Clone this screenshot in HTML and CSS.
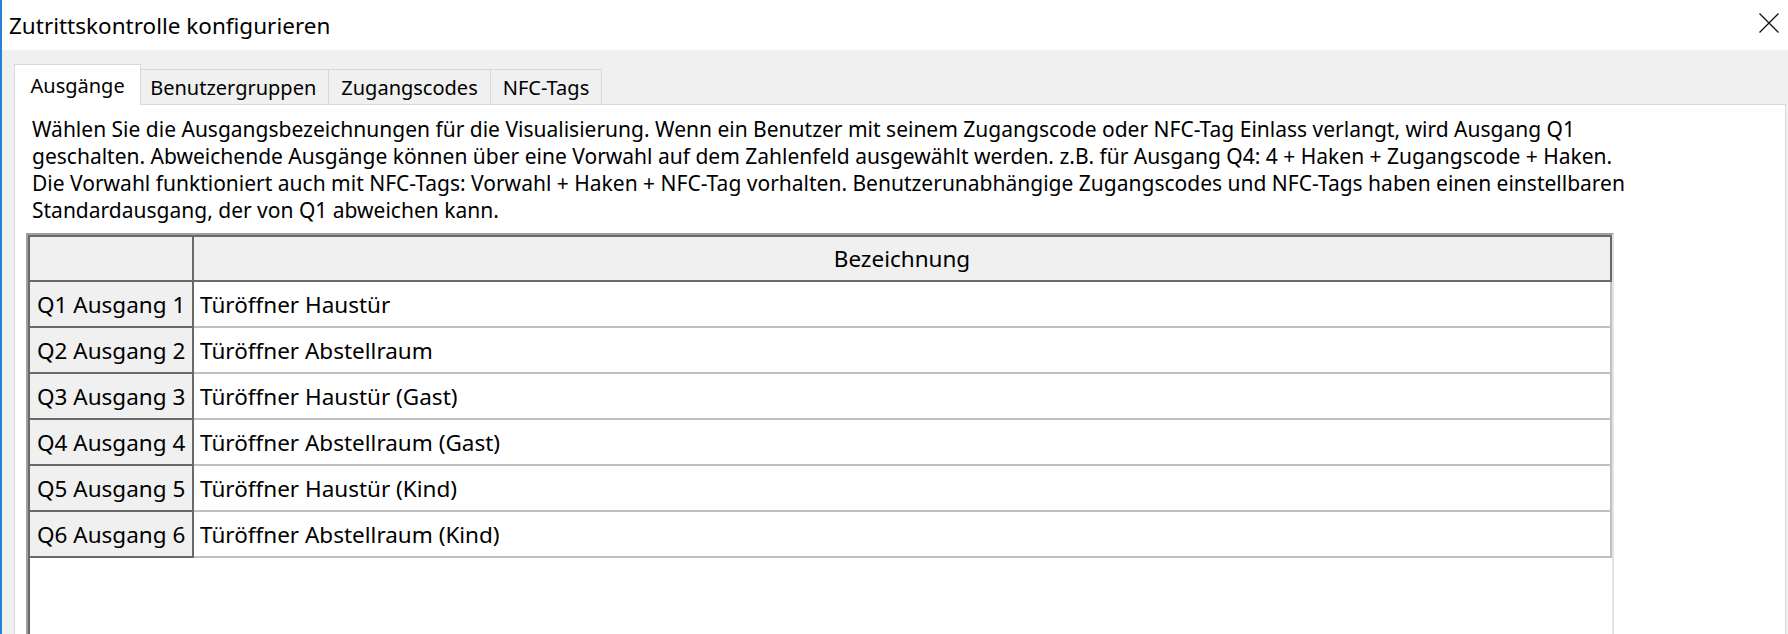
FILE: index.html
```html
<!DOCTYPE html>
<html lang="de">
<head>
<meta charset="utf-8">
<title>Zutrittskontrolle konfigurieren</title>
<link rel="stylesheet" href="styles.css">
</head>
<body>
<div class="window">
  <div class="titlebar">
    <span class="title">Zutrittskontrolle konfigurieren</span>
    <svg class="close" width="20" height="20" viewBox="0 0 20 20" aria-label="Schließen">
      <path d="M0.5 0.5 L19.5 19.5 M19.5 0.5 L0.5 19.5" stroke="#111" stroke-width="1.3" fill="none"/>
    </svg>
  </div>
  <div class="client">
    <div class="tabs">
      <div class="tab active">Ausgänge</div>
      <div class="tab">Benutzergruppen</div>
      <div class="tab">Zugangscodes</div>
      <div class="tab">NFC-Tags</div>
    </div>
    <div class="panel">
      <p class="desc">Wählen Sie die Ausgangsbezeichnungen für die Visualisierung. Wenn ein Benutzer mit seinem Zugangscode oder NFC-Tag Einlass verlangt, wird Ausgang Q1<br>geschalten. Abweichende Ausgänge können über eine Vorwahl auf dem Zahlenfeld ausgewählt werden. z.B. für Ausgang Q4: 4 + Haken + Zugangscode + Haken.<br>Die Vorwahl funktioniert auch mit NFC-Tags: Vorwahl + Haken + NFC-Tag vorhalten. Benutzerunabhängige Zugangscodes und NFC-Tags haben einen einstellbaren<br>Standardausgang, der von Q1 abweichen kann.</p>
      <div class="grid">
        <div class="grid-inner">
          <div class="row head">
            <div class="rh corner"></div>
            <div class="colhead">Bezeichnung</div>
          </div>
          <div class="row"><div class="rh">Q1 Ausgang 1</div><div class="cell">Türöffner Haustür</div></div>
          <div class="row"><div class="rh">Q2 Ausgang 2</div><div class="cell">Türöffner Abstellraum</div></div>
          <div class="row"><div class="rh">Q3 Ausgang 3</div><div class="cell">Türöffner Haustür (Gast)</div></div>
          <div class="row"><div class="rh">Q4 Ausgang 4</div><div class="cell">Türöffner Abstellraum (Gast)</div></div>
          <div class="row"><div class="rh">Q5 Ausgang 5</div><div class="cell">Türöffner Haustür (Kind)</div></div>
          <div class="row"><div class="rh">Q6 Ausgang 6</div><div class="cell">Türöffner Abstellraum (Kind)</div></div>
        </div>
      </div>
    </div>
  </div>
</div>
</body>
</html>
```
FILE: styles.css
```css
html, body {
  margin: 0;
  padding: 0;
}

body {
  width: 1788px;
  height: 634px;
  overflow: hidden;
  background: #f0f0f0;
  font-family: "Noto Sans", "DejaVu Sans", sans-serif;
  color: #000;
}

.window {
  height: 634px;
  box-sizing: border-box;
  border-left: 2px solid #2a7fd6;
  display: flex;
  flex-direction: column;
}

.titlebar {
  flex: none;
  height: 50px;
  background: #fff;
  display: flex;
  align-items: center;
  justify-content: space-between;
  padding: 0 9px 0 7px;
}

.title {
  font-size: 22.5px;
}

.close {
  align-self: flex-start;
  margin-top: 13px;
}

.client {
  flex: 1;
  min-height: 0;
  display: flex;
  flex-direction: column;
  padding: 14px 2px 0 12px;
}

.tabs {
  flex: none;
  height: 40px;
  display: flex;
  align-items: flex-end;
  position: relative;
  z-index: 1;
}

.tab {
  height: 35px;
  box-sizing: border-box;
  border: 1px solid #d9d9d9;
  border-left: none;
  border-bottom: none;
  padding: 0 12px;
  background: #f0f0f0;
  font-size: 20px;
  display: flex;
  align-items: center;
}

.tab.active {
  position: relative;
  z-index: 1;
  height: 41px;
  margin-bottom: -1px;
  margin-right: -3px;
  background: #fff;
  border-left: 1px solid #d9d9d9;
  padding: 0 15.5px;
}

.panel {
  flex: 1;
  min-height: 0;
  display: flex;
  flex-direction: column;
  background: #fff;
  border: 1px solid #d9d9d9;
  border-bottom: none;
  padding: 11px 0 0 11px;
}

.desc {
  margin: 0 0 9px 0;
  padding-left: 6px;
  font-size: 21px;
  line-height: 27px;
  white-space: nowrap;
}

.grid {
  flex: 1;
  width: 1588px;
  box-sizing: border-box;
  border-style: solid;
  border-width: 2px 2px 0 2px;
  border-color: #a0a0a0 #e3e3e3 #e3e3e3 #a0a0a0;
  background: #fff;
}

.grid-inner {
  height: 100%;
  border-style: solid;
  border-width: 2px 0 0 2px;
  border-color: #696969;
}

.row {
  display: flex;
  height: 46px;
  font-size: 22.5px;
}

.row.head {
  height: 45px;
}

.rh {
  width: 155px;
  flex: none;
  box-sizing: content-box;
  background: #f0f0f0;
  border-right: 2px solid #696969;
  border-bottom: 2px solid #696969;
  padding-left: 7px;
  display: flex;
  align-items: center;
  white-space: nowrap;
}

.rh.corner {
  padding-left: 0;
  width: 162px;
}

.colhead {
  width: 1416px;
  flex: none;
  background: #f0f0f0;
  border-right: 2px solid #696969;
  border-bottom: 2px solid #696969;
  display: flex;
  align-items: center;
  justify-content: center;
}

.cell {
  width: 1410px;
  flex: none;
  padding-left: 6px;
  border-right: 2px solid #c0c0c0;
  border-bottom: 2px solid #c0c0c0;
  display: flex;
  align-items: center;
  white-space: nowrap;
}
```
